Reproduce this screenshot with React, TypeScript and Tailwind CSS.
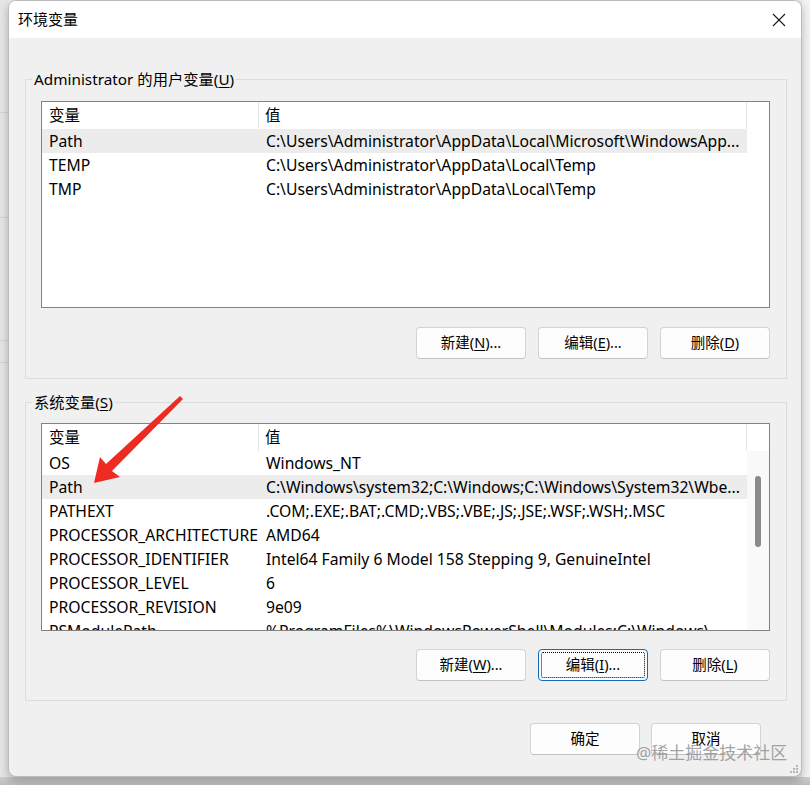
import React from 'react';

const FONT = { fontFamily: "'Noto Sans', 'Noto Sans CJK SC', sans-serif" };

type Row = { name: string; value: string; selected?: boolean };

const USER_VARS: Row[] = [
    { name: 'Path', value: 'C:\\Users\\Administrator\\AppData\\Local\\Microsoft\\WindowsApp...', selected: true },
    { name: 'TEMP', value: 'C:\\Users\\Administrator\\AppData\\Local\\Temp' },
    { name: 'TMP', value: 'C:\\Users\\Administrator\\AppData\\Local\\Temp' },
];

const SYSTEM_VARS: Row[] = [
    { name: 'OS', value: 'Windows_NT' },
    { name: 'Path', value: 'C:\\Windows\\system32;C:\\Windows;C:\\Windows\\System32\\Wbe...', selected: true },
    { name: 'PATHEXT', value: '.COM;.EXE;.BAT;.CMD;.VBS;.VBE;.JS;.JSE;.WSF;.WSH;.MSC' },
    { name: 'PROCESSOR_ARCHITECTURE', value: 'AMD64' },
    { name: 'PROCESSOR_IDENTIFIER', value: 'Intel64 Family 6 Model 158 Stepping 9, GenuineIntel' },
    { name: 'PROCESSOR_LEVEL', value: '6' },
    { name: 'PROCESSOR_REVISION', value: '9e09' },
    { name: 'PSModulePath', value: '%ProgramFiles%\\WindowsPowerShell\\Modules;C:\\Windows\\...' },
];

// label like "新建(N)..." with underlined mnemonic
const Mnemonic: React.FC<{ text: string; k: string; tail?: string }> = ({ text, k, tail = '' }) => (
    <span>
        {text}(<span className="underline underline-offset-2">{k}</span>){tail}
    </span>
);

const WinButton: React.FC<{ children: React.ReactNode; focused?: boolean }> = ({ children, focused }) => (
    <button
        className={`relative w-[110px] h-[32px] rounded-[4px] bg-[#fdfdfd] text-[14.5px] text-black flex items-center justify-center border ${
            focused ? 'border-[#0f6cbd]' : 'border-[#d3d3d3] border-b-[#c2c2c2]'
        }`}
    >
        {children}
        {focused && <span className="absolute inset-[2px] border border-dotted border-black rounded-[2px]" />}
    </button>
);

const VarList: React.FC<{ rows: Row[]; scroll?: boolean; height: string }> = ({ rows, scroll, height }) => (
    <div className={`relative ${height} border border-[#828282] bg-white flex overflow-hidden`}>
        <div className="w-[705px] flex flex-col shrink-0">
            {/* header */}
            <div className="h-[27px] flex items-center text-[15.5px] shrink-0">
                <div className="w-[217px] h-full pl-[7px] pt-[1px] flex items-center border-r border-[#e5e5e5]">变量</div>
                <div className="flex-1 h-full pl-[6px] pt-[1px] flex items-center border-r border-[#e5e5e5]">值</div>
            </div>
            {rows.map((r, i) => (
                <div
                    key={i}
                    className={`h-[24px] shrink-0 pt-[2px] flex items-center text-[15.7px] whitespace-nowrap ${r.selected ? 'bg-[#ececec]' : ''}`}
                >
                    <div className="w-[217px] pl-[7px] overflow-hidden">{r.name}</div>
                    <div className="flex-1 pl-[7px] overflow-hidden">{r.value}</div>
                </div>
            ))}
        </div>
        <div className={`flex-1 flex flex-col ${scroll ? 'bg-[#f9f9f9]' : 'bg-white'}`}>
            <div className="h-[27px] bg-white shrink-0" />
            {scroll && (
                <div className="pt-[25px] flex justify-center pr-[1px]">
                    <div className="w-[6px] h-[71px] rounded-full bg-[#8a8a8a]" />
                </div>
            )}
        </div>
    </div>
);

const Group: React.FC<{ label: React.ReactNode; className?: string; children: React.ReactNode }> = ({ label, className, children }) => (
    <fieldset className={`ml-[16px] w-[762px] border border-[#dcdcdc] pl-[15px] pr-[16px] ${className ?? ''}`}>
        <legend className="-ml-[9px] px-[2px] text-[15.3px] leading-[22px]">{label}</legend>
        {children}
    </fieldset>
);

export default function App() {
    return (
        <div className="relative w-[810px] h-[785px] bg-[#e9e9e9] overflow-hidden text-black" style={FONT}>
            {/* window behind */}
            <div className="absolute left-0 top-0 w-[8px] h-full bg-[#e6e6e6]">
                <div className="mt-[112px] h-px bg-[#d4d4d4]" />
                <div className="mt-[104px] h-px bg-[#d4d4d4]" />
                <div className="mt-[122px] h-px bg-[#d4d4d4]" />
                <div className="mt-[21px] h-px bg-[#d4d4d4]" />
            </div>
            <div className="absolute right-0 top-0 w-[8px] h-full bg-[#f3f3f3]" />
            <div className="absolute left-0 bottom-0 w-full h-[8px] bg-gradient-to-b from-[#cfcfcf] to-[#bdbdbd]" />

            {/* dialog */}
            <div className="absolute left-[8px] top-0 w-[794px] h-[777px] rounded-[8px] overflow-hidden bg-[#f0f0f0] border border-[#bcbcbc] shadow-[0_4px_10px_rgba(0,0,0,0.25)] flex flex-col">
                <div className="h-[37px] bg-white flex items-center justify-between pl-[9px] pr-[14px] shrink-0">
                    <span className="text-[15px]">环境变量</span>
                    <svg width="14" height="14" viewBox="0 0 14 14" className="mr-[1px]">
                        <path d="M1 1 L13 13 M13 1 L1 13" stroke="#1a1a1a" strokeWidth="1.1" />
                    </svg>
                </div>

                <Group label={<>Administrator 的用户变量(<span className="underline underline-offset-2">U</span>)</>} className="mt-[30px] pt-[11px] pb-[19px]">
                    <VarList rows={USER_VARS} height="h-[207px]" />
                    <div className="mt-[19px] flex justify-end gap-[12px]">
                        <WinButton><Mnemonic text="新建" k="N" tail="..." /></WinButton>
                        <WinButton><Mnemonic text="编辑" k="E" tail="..." /></WinButton>
                        <WinButton><Mnemonic text="删除" k="D" /></WinButton>
                    </div>
                </Group>

                <Group label={<>系统变量(<span className="underline underline-offset-2">S</span>)</>} className="mt-[12px] pt-[10px] pb-[19px]">
                    <VarList rows={SYSTEM_VARS} scroll height="h-[208px]" />
                    <div className="mt-[18px] flex justify-end gap-[12px]">
                        <WinButton><Mnemonic text="新建" k="W" tail="..." /></WinButton>
                        <WinButton focused><Mnemonic text="编辑" k="I" tail="..." /></WinButton>
                        <WinButton><Mnemonic text="删除" k="L" /></WinButton>
                    </div>
                </Group>

                <div className="mt-[22px] flex justify-end gap-[11px] pr-[40px]">
                    <WinButton>确定</WinButton>
                    <WinButton>取消</WinButton>
                </div>

                {/* resize grip */}
                <svg className="absolute right-[2px] bottom-[2px]" width="10" height="10" viewBox="0 0 10 10">
                    {[[8, 2], [5, 5], [8, 5], [2, 8], [5, 8], [8, 8]].map(([x, y], i) => (
                        <rect key={i} x={x - 1} y={y - 1} width="2" height="2" fill="#b5b5b5" />
                    ))}
                </svg>
            </div>

            {/* annotation arrow */}
            <svg className="absolute left-0 top-0 pointer-events-none" width="810" height="785">
                <polygon points="94,483 100,457 106,464 180,396 183,399 112,471 120,477" fill="#ee2b22" />
            </svg>

            {/* watermark */}
            <div className="absolute left-[636px] top-[741px] text-[17px] leading-[24px] text-[#8c8c8c]/80 whitespace-nowrap">
                @稀土掘金技术社区
            </div>
        </div>
    );
}
